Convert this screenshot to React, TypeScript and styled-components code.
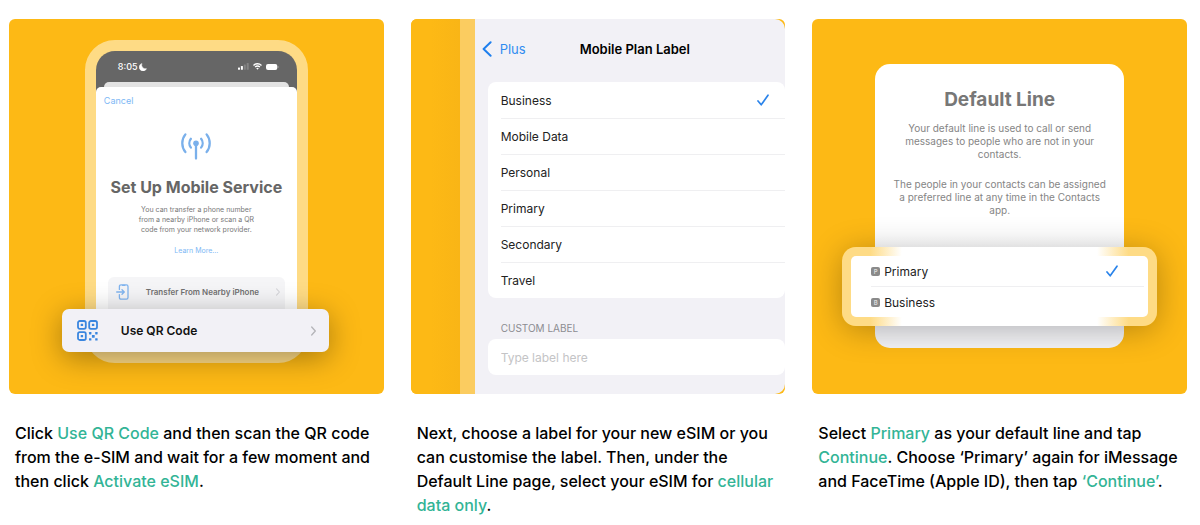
import React from "react";
import styled, { createGlobalStyle } from "styled-components";

const GlobalStyle = createGlobalStyle`
  *, *::before, *::after { box-sizing: border-box; }
  body { margin: 0; background: #fff; color: #000; font-family: Inter, "Liberation Sans", sans-serif; }
  h2, h3, p, ul { margin: 0; padding: 0; }
  button, input { font: inherit; color: inherit; }
  button { border: 0; background: none; padding: 0; cursor: pointer; text-align: left; }
  a { text-decoration: none; }
  svg { display: block; flex: none; }
`;

const Steps = styled.main`
  display: grid;
  grid-template-columns: repeat(3, minmax(0, 1fr));
  gap: 27px;
  padding: 19px 13px 0 9px;
`;

const Step = styled.article`
  display: flex;
  flex-direction: column;
`;

const Shot = styled.div`
  aspect-ratio: 1;
  display: flex;
  justify-content: center;
  align-items: flex-start;
  overflow: hidden;
  border-radius: 6px;
  background: #fdb915;
`;

const Caption = styled.p`
  padding: 27px 6px 0;
  font-size: 16px;
  line-height: 24px;
  font-weight: 500;
`;

const Accent = styled.span`
  color: #32b496;
`;

const HiddenRadio = styled.input`
  position: absolute;
  opacity: 0;
  width: 1px;
  height: 1px;
  margin: 0;
`;

/* Phone with the set-up sheet */

const Device = styled.div`
  position: relative;
  margin-top: 21px;
`;

const PhoneFrame = styled.div`
  width: 223px;
  height: 323px;
  border: 11px solid #fedb85;
  border-radius: 30px;
  background: #fedb85;
`;

const PhoneScreen = styled.div`
  height: 100%;
  display: flex;
  flex-direction: column;
  overflow: hidden;
  border-radius: 19px 19px 0 0;
  background: #666;
`;

const StatusBar = styled.div`
  display: flex;
  align-items: center;
  justify-content: space-between;
  height: 31px;
  padding: 0 18px 0 22px;
  color: #fff;
  font-size: 9px;
  font-weight: 500;
`;

const StatusGroup = styled.div<{ $gap: number }>`
  display: flex;
  align-items: center;
  gap: ${(p) => p.$gap}px;
`;

const BackSheet = styled.div`
  height: 5px;
  margin: 0 8px;
  border-radius: 5px 5px 0 0;
  background: #e3e3e3;
`;

const SetupSheet = styled.div`
  flex: 1;
  display: flex;
  flex-direction: column;
  align-items: center;
  padding: 8px 12px 0;
  border-radius: 5px 5px 0 0;
  background: #fff;
`;

const CancelButton = styled.button`
  align-self: flex-start;
  margin-left: -4px;
  color: #7db8f5;
  font-size: 9px;
  line-height: 12px;
`;

const Antenna = styled.svg`
  margin-top: 25px;
`;

const SetupTitle = styled.h2`
  margin-top: 16px;
  color: #666;
  font-size: 16px;
  line-height: 22px;
  font-weight: 700;
  white-space: nowrap;
`;

const SetupText = styled.p`
  width: 136px;
  margin-top: 7px;
  color: #777;
  font-size: 7px;
  line-height: 10px;
  text-align: center;
`;

const LearnMore = styled.a`
  margin-top: 11px;
  color: #7db8f5;
  font-size: 7px;
  line-height: 10px;
`;

const TransferOption = styled.button`
  display: flex;
  align-items: flex-start;
  align-self: stretch;
  flex: 1;
  gap: 17px;
  margin-top: 21px;
  padding: 7px 8px;
  border-radius: 6px 6px 0 0;
  background: #f5f5f7;
  color: #727272;
  font-size: 8px;
  line-height: 16px;
  font-weight: 600;
`;

const TransferChevron = styled.span`
  display: flex;
  align-items: center;
  height: 16px;
`;

const OptionName = styled.span`
  flex: 1;
  white-space: nowrap;
`;

const QrOption = styled.button`
  position: absolute;
  left: -23px;
  right: -21px;
  top: 269px;
  height: 43px;
  display: flex;
  align-items: center;
  gap: 23px;
  padding: 0 13px 0 15px;
  border-radius: 7px;
  background: #f2f1f6;
  color: #111;
  font-size: 12px;
  font-weight: 600;
  box-shadow: 0 6px 30px rgba(0, 0, 0, 0.35);
`;

/* Plan label page */

const Gutter = styled.div`
  align-self: stretch;
  width: 64px;
  border-right: 15px solid #fbcc60;
  background: linear-gradient(90deg, #fdb915 40%, #f9b516);
`;

const PlanScreen = styled.div`
  align-self: stretch;
  flex: 1;
  min-width: 0;
  border-radius: 0 10px 10px 0;
  background: #f2f1f6;
`;

const NavBar = styled.header`
  display: flex;
  align-items: center;
  height: 63px;
  padding: 0 0 3px 7px;
  gap: 54px;
`;

const BackButton = styled.button`
  display: flex;
  align-items: center;
  gap: 8px;
  color: #2f8cf0;
  font-size: 13px;
`;

const NavTitle = styled.h2`
  font-size: 13px;
  font-weight: 600;
  white-space: nowrap;
`;

const LabelList = styled.div`
  margin-left: 13px;
  padding-left: 13px;
  border-radius: 8px;
  background: #fff;
`;

const LabelRow = styled.label`
  position: relative;
  display: flex;
  align-items: center;
  justify-content: space-between;
  height: 36px;
  padding-right: 16px;
  font-size: 12px;
  color: #222;

  & + & {
    border-top: 1px solid #efeff1;
  }
`;

const FieldLabel = styled.label`
  display: block;
  padding: 23px 0 3px 26px;
  color: #8c8c91;
  font-size: 10px;
  line-height: 15px;
`;

const LabelField = styled.input`
  display: block;
  width: calc(100% - 13px);
  height: 36px;
  margin-left: 13px;
  padding: 0 13px;
  border: 0;
  border-radius: 8px;
  background: #fff;
  font-size: 12px;

  &::placeholder {
    color: #c4c4c6;
    opacity: 1;
  }
`;

/* Default line dialog */

const LineDialog = styled.div`
  position: relative;
  width: 249px;
  height: 284px;
  margin-top: 45px;
  padding: 23px 16px 0;
  border-radius: 15px;
  background: linear-gradient(#fff 60%, #f4f4f7 92%);
  color: #858585;
  text-align: center;
`;

const LineTitle = styled.h2`
  margin-bottom: 10px;
  color: #777;
  font-size: 19px;
  line-height: 25px;
  font-weight: 700;
`;

const LineText = styled.p`
  font-size: 10px;
  line-height: 13px;

  & + & {
    margin-top: 17px;
  }
`;

const LinePicker = styled.div`
  position: absolute;
  left: -33px;
  right: -33px;
  top: 183px;
  padding: 9px;
  border-radius: 14px;
  background: linear-gradient(90deg, #fedb85 9%, #fff 19%, #fff 81%, #fedb85 91%);
  box-shadow: 0 4px 32px rgba(0, 0, 0, 0.28);
`;

const LineList = styled.div`
  padding: 0 4px 0 20px;
  border-radius: 5px;
  background: #fff;
`;

const LineRow = styled.label`
  position: relative;
  display: flex;
  align-items: center;
  gap: 4px;
  height: 30px;
  padding-right: 26px;
  color: #222;
  font-size: 12px;

  & + & {
    height: 31px;
    border-top: 1px solid #efeff1;
  }
`;

const SimBadge = styled.span`
  width: 9px;
  height: 9px;
  border-radius: 2px;
  background: #8a8a8a;
  color: #ddd;
  font-size: 6px;
  line-height: 9px;
  font-weight: 600;
  text-align: center;
`;

const LineName = styled.span`
  flex: 1;
  text-align: left;
`;

const CheckIcon = () => (
  <svg width="12" height="12" viewBox="0 0 12 12" fill="none" stroke="#2b84ea" strokeWidth="1.7" strokeLinecap="round" strokeLinejoin="round" aria-hidden="true">
    <path d="M1 7 4.2 10.8 11 1.2" />
  </svg>
);

const ChevronIcon = ({ size, color }: { size: number; color: string }) => (
  <svg width={size / 2} height={size} viewBox="0 0 5 10" fill="none" stroke={color} strokeWidth="1.3" strokeLinecap="round" strokeLinejoin="round" aria-hidden="true">
    <path d="M.7 1 4.3 5 .7 9" />
  </svg>
);

const BackIcon = () => (
  <svg width="10" height="16" viewBox="0 0 10 16" fill="none" stroke="#2080ee" strokeWidth="2" strokeLinecap="round" strokeLinejoin="round" aria-hidden="true">
    <path d="M8.6 1.3 1.6 8l7 6.7" />
  </svg>
);

const MoonIcon = () => (
  <svg width="8" height="8" viewBox="0 0 8 8" fill="#fff" aria-hidden="true">
    <path d="M2.9.5A3.8 3.8 0 1 0 7.5 5.7 3.9 3.9 0 0 1 2.9.5Z" stroke="#fff" strokeWidth=".5" />
  </svg>
);

const SignalIcon = () => (
  <svg width="11" height="7" viewBox="0 0 11 7" fill="#fff" aria-hidden="true">
    <rect x="0" y="4.4" width="2" height="2.4" rx=".5" />
    <rect x="2.9" y="3.1" width="2" height="3.7" rx=".5" />
    <rect x="5.8" y="1.6" width="2" height="5.2" rx=".5" opacity=".2" />
    <rect x="8.7" y="0" width="2" height="6.8" rx=".5" opacity=".2" />
  </svg>
);

const WifiIcon = () => (
  <svg width="9" height="7" viewBox="0 0 9 7" fill="none" stroke="#fff" strokeWidth="1.4" aria-hidden="true">
    <path d="M.5 2.4a5.8 5.8 0 0 1 8 0M2.1 4.1a3.4 3.4 0 0 1 4.8 0" />
    <path d="M3.2 5.3a1.9 1.9 0 0 1 2.6 0L4.5 6.7Z" fill="#fff" stroke="none" />
  </svg>
);

const BatteryIcon = () => (
  <svg width="13" height="6" viewBox="0 0 13 6" fill="#fff" aria-hidden="true">
    <rect width="11.3" height="6" rx="2" />
    <path d="M11.9 2a1.1 1.1 0 0 1 0 2Z" opacity=".6" />
  </svg>
);

const AntennaIcon = () => (
  <Antenna width="32" height="28" viewBox="0 0 32 28" fill="none" stroke="#7ab0eb" strokeWidth="2.3" strokeLinecap="round" aria-hidden="true">
    <circle cx="16" cy="11.3" r="2.8" fill="#7ab0eb" stroke="none" />
    <path d="M16 12v14.6M10.9 6.8a7 7 0 0 0 0 8.8M21.1 6.8a7 7 0 0 1 0 8.8" />
    <path d="M5.4 2.4a14 14 0 0 0 0 17.6M26.6 2.4a14 14 0 0 1 0 17.6" />
  </Antenna>
);

const TransferIcon = () => (
  <svg width="13" height="16" viewBox="0 0 13 16" fill="none" stroke="#80b4ef" strokeWidth="1.3" strokeLinecap="round" strokeLinejoin="round" aria-hidden="true">
    <path d="M3.4 5.4V2.4Q3.4.8 5 .8h5.4q1.6 0 1.6 1.6v11.2q0 1.6-1.6 1.6H5q-1.6 0-1.6-1.6v-3" />
    <path d="M.7 8h7.5M6 5.8 8.3 8 6 10.2M6.5 1.3h2.4" />
  </svg>
);

const QrIcon = () => (
  <svg width="21" height="21" viewBox="0 0 21 21" fill="none" stroke="#3a86df" strokeWidth="1.8" aria-hidden="true">
    <rect x="1" y="1" width="7.8" height="7.8" rx="1.8" />
    <rect x="12.2" y="1" width="7.8" height="7.8" rx="1.8" />
    <rect x="1" y="12.2" width="7.8" height="7.8" rx="1.8" />
    <g fill="#3a86df" stroke="none">
      <rect x="3.7" y="3.7" width="2.4" height="2.4" rx=".4" />
      <rect x="14.9" y="3.7" width="2.4" height="2.4" rx=".4" />
      <rect x="3.7" y="14.9" width="2.4" height="2.4" rx=".4" />
      <rect x="12" y="12" width="2.4" height="2.4" rx=".4" />
      <rect x="18.2" y="12" width="2.4" height="2.4" rx=".4" />
      <rect x="14.9" y="14.9" width="2.8" height="2.8" rx=".4" />
      <rect x="12" y="18.2" width="2.4" height="2.4" rx=".4" />
      <rect x="18.2" y="18.2" width="2.4" height="2.4" rx=".4" />
    </g>
  </svg>
);

const planLabels = ["Business", "Mobile Data", "Personal", "Primary", "Secondary", "Travel"];
const lines = ["Primary", "Business"];

export default function App() {
  const [plan, setPlan] = React.useState("Business");
  const [line, setLine] = React.useState("Primary");

  return (
    <>
      <GlobalStyle />
      <Steps>
        <Step>
          <Shot>
            <Device>
              <PhoneFrame>
                <PhoneScreen>
                  <StatusBar>
                    <StatusGroup $gap={1}>
                      <span>8:05</span>
                      <MoonIcon />
                    </StatusGroup>
                    <StatusGroup $gap={4}>
                      <SignalIcon />
                      <WifiIcon />
                      <BatteryIcon />
                    </StatusGroup>
                  </StatusBar>
                  <BackSheet />
                  <SetupSheet>
                    <CancelButton type="button">Cancel</CancelButton>
                    <AntennaIcon />
                    <SetupTitle>Set Up Mobile Service</SetupTitle>
                    <SetupText>
                      You can transfer a phone number
                      <br />
                      from a nearby iPhone or scan a QR
                      <br />
                      code from your network provider.
                    </SetupText>
                    <LearnMore href="#learn-more">Learn More...</LearnMore>
                    <TransferOption type="button">
                      <TransferIcon />
                      <OptionName>Transfer From Nearby iPhone</OptionName>
                      <TransferChevron>
                        <ChevronIcon size={8} color="#d4d4d8" />
                      </TransferChevron>
                    </TransferOption>
                  </SetupSheet>
                </PhoneScreen>
              </PhoneFrame>
              <QrOption type="button">
                <QrIcon />
                <OptionName>Use QR Code</OptionName>
                <ChevronIcon size={10} color="#b4b4b8" />
              </QrOption>
            </Device>
          </Shot>
          <Caption>
            Click <Accent>Use QR Code</Accent> and then scan the QR code from the e-SIM and wait for a few moment and
            then click <Accent>Activate eSIM</Accent>.
          </Caption>
        </Step>

        <Step>
          <Shot>
            <Gutter />
            <PlanScreen>
              <NavBar>
                <BackButton type="button">
                  <BackIcon />
                  Plus
                </BackButton>
                <NavTitle>Mobile Plan Label</NavTitle>
              </NavBar>
              <LabelList role="radiogroup" aria-label="Mobile Plan Label">
                {planLabels.map((name) => (
                  <LabelRow key={name}>
                    <HiddenRadio type="radio" name="plan" checked={plan === name} onChange={() => setPlan(name)} />
                    <span>{name}</span>
                    {plan === name && <CheckIcon />}
                  </LabelRow>
                ))}
              </LabelList>
              <FieldLabel htmlFor="custom-label">CUSTOM LABEL</FieldLabel>
              <LabelField id="custom-label" type="text" placeholder="Type label here" />
            </PlanScreen>
          </Shot>
          <Caption>
            Next, choose a label for your new eSIM or you can customise the label. Then, under the Default Line page,
            select your eSIM for <Accent>cellular data only</Accent>.
          </Caption>
        </Step>

        <Step>
          <Shot>
            <LineDialog>
              <LineTitle>Default Line</LineTitle>
              <LineText>
                Your default line is used to call or send
                <br />
                messages to people who are not in your
                <br />
                contacts.
              </LineText>
              <LineText>
                The people in your contacts can be assigned
                <br />
                a preferred line at any time in the Contacts
                <br />
                app.
              </LineText>
              <LinePicker>
                <LineList role="radiogroup" aria-label="Default Line">
                  {lines.map((name) => (
                    <LineRow key={name}>
                      <HiddenRadio type="radio" name="line" checked={line === name} onChange={() => setLine(name)} />
                      <SimBadge>{name[0]}</SimBadge>
                      <LineName>{name}</LineName>
                      {line === name && <CheckIcon />}
                    </LineRow>
                  ))}
                </LineList>
              </LinePicker>
            </LineDialog>
          </Shot>
          <Caption>
            Select <Accent>Primary</Accent> as your default line and tap <Accent>Continue</Accent>. Choose ‘Primary’
            again for iMessage and FaceTime (Apple ID), then tap <Accent>‘Continue’</Accent>.
          </Caption>
        </Step>
      </Steps>
    </>
  );
}
